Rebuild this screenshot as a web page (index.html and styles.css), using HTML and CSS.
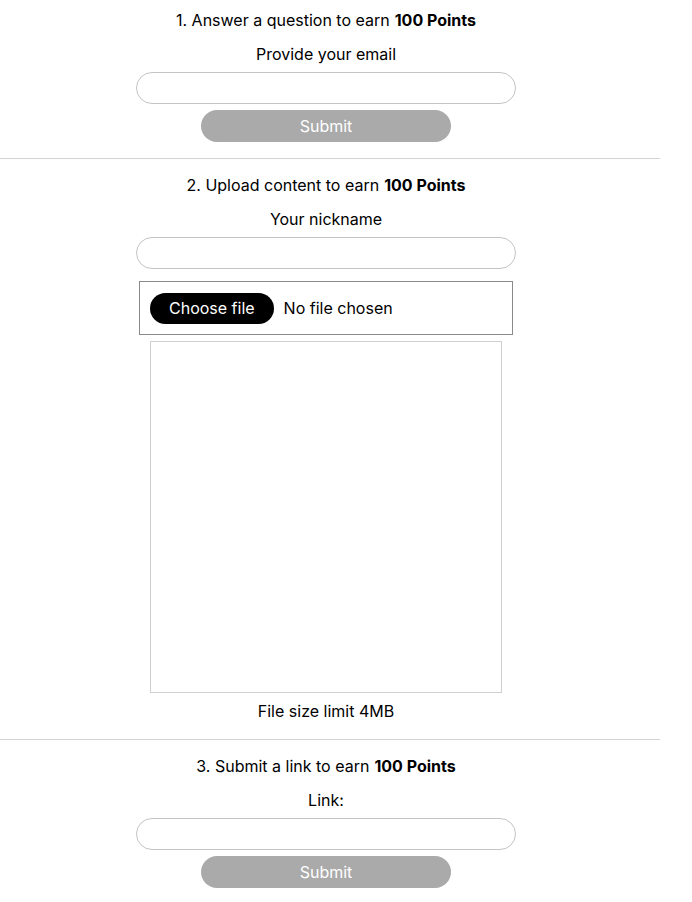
FILE: index.html
```html
<!DOCTYPE html>
<html lang="en">
<head>
<meta charset="utf-8">
<title>Earn Points</title>
<link rel="stylesheet" href="styles.css">
</head>
<body>
<main class="page">
  <section class="task task-first">
    <h2 class="task-title"><span>1. Answer a question to earn</span><strong>100 Points</strong></h2>
    <label class="field-label" for="email">Provide your email</label>
    <input class="text-input" id="email" type="email">
    <button class="submit-btn" type="button">Submit</button>
  </section>
  <hr class="divider">
  <section class="task">
    <h2 class="task-title"><span>2. Upload content to earn</span><strong>100 Points</strong></h2>
    <label class="field-label" for="nick">Your nickname</label>
    <input class="text-input" id="nick" type="text">
    <div class="file-box">
      <label class="file-btn">Choose file<input class="file-hidden" type="file"></label>
      <span class="file-status">No file chosen</span>
    </div>
    <div class="preview"></div>
    <p class="file-note">File size limit 4MB</p>
  </section>
  <hr class="divider">
  <section class="task">
    <h2 class="task-title"><span>3. Submit a link to earn</span><strong>100 Points</strong></h2>
    <label class="field-label" for="link">Link:</label>
    <input class="text-input" id="link" type="url">
    <button class="submit-btn" type="button">Submit</button>
  </section>
</main>
</body>
</html>
```

FILE: styles.css
```css
* { box-sizing: border-box; }
html, body { margin: 0; padding: 0; background: #fff; }
body {
  font-family: Inter, "Liberation Sans", Arial, sans-serif;
  font-size: 16px;
  line-height: 20px;
  color: #000;
}
.page {
  width: 660px;
}
.task {
  display: flex;
  flex-direction: column;
  align-items: center;
  padding: 16px 8px 16px 0;
}
.task-first { padding-top: 10px; }
.task-title {
  display: flex;
  gap: 5px;
  margin: 0;
  font-size: 16px;
  line-height: 20px;
  font-weight: 400;
}
.task-title strong { font-weight: 700; }
.field-label {
  margin-top: 14px;
  line-height: 20px;
}
.text-input {
  margin-top: 8px;
  width: 380px;
  height: 32px;
  border: 1px solid #c4c4c4;
  border-radius: 16px;
  padding: 0 14px;
  font: inherit;
  outline: none;
  background: #fff;
}
.submit-btn {
  margin-top: 6px;
  width: 250px;
  height: 32px;
  border: none;
  border-radius: 16px;
  background: #aaaaaa;
  color: #fff;
  font: inherit;
  padding: 0;
}
.divider {
  margin: 0;
  border: none;
  border-top: 1px solid #d3d3d3;
  height: 0;
}
.file-box {
  margin-top: 12px;
  width: 374px;
  height: 54px;
  border: 1px solid #8a8a8a;
  display: flex;
  align-items: center;
  padding: 0 10px;
  gap: 10px;
}
.file-btn {
  display: inline-flex;
  align-items: center;
  height: 31px;
  padding: 0 19px;
  background: #000;
  color: #fff;
  border-radius: 16px;
  cursor: pointer;
}
.file-hidden { display: none; }
.preview {
  margin-top: 6px;
  width: 352px;
  height: 352px;
  border: 1px solid #d0d0d0;
}
.file-note {
  margin: 8px 0 2px;
  line-height: 20px;
}
```
